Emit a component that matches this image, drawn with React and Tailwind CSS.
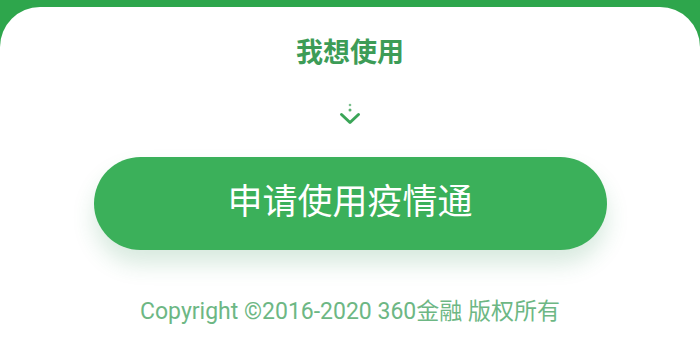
export default function App() {
    return (
        <div className="w-[700px] h-[350px] overflow-hidden bg-[#2ea64c] pt-[7px] font-['Roboto','Noto_Sans_CJK_SC',sans-serif]">
            <div className="h-full bg-white rounded-t-[40px] flex flex-col items-center">
                {/* Title */}
                <p className="mt-[28px] text-[27px] leading-[36px] font-bold text-[#3d9c57]">我想使用</p>

                {/* Arrow */}
                <svg className="mt-[31px]" width="24" height="24" viewBox="0 0 24 24" fill="none">
                    <circle cx="12" cy="3" r="1.3" fill="#7cc08e" />
                    <circle cx="12" cy="8" r="1.5" fill="#5bb270" />
                    <path d="M3.5 12.5 L12 20.5 L20.5 12.5" stroke="#3aa557" strokeWidth="3" strokeLinecap="round" strokeLinejoin="round" />
                </svg>

                {/* Button */}
                <button className="mt-[31px] w-[513px] h-[93px] rounded-full bg-[#3bb05a] text-white text-[35px] shadow-[0_14px_22px_rgba(40,140,80,0.18)]">
                    申请使用疫情通
                </button>

                {/* Footer */}
                <p className="mt-[47px] text-[23px] leading-[30px] text-[#6db784]">
                    Copyright ©2016-2020 360金融 版权所有
                </p>
            </div>
        </div>
    );
}
